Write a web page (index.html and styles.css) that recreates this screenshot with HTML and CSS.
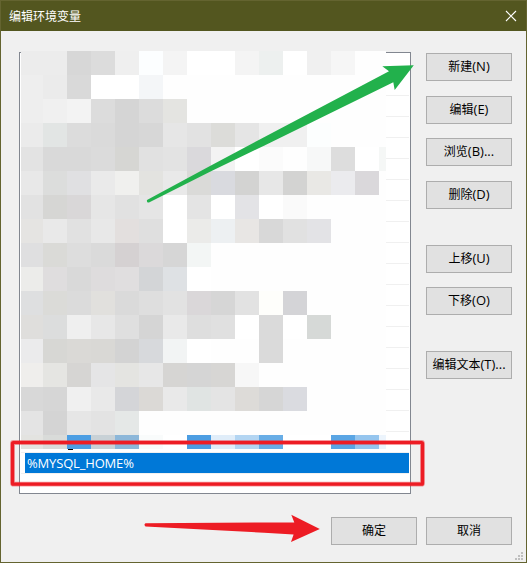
FILE: index.html
```
<!DOCTYPE html>
<html lang="zh-CN">
<head>
<meta charset="utf-8">
<title>编辑环境变量</title>
<link rel="stylesheet" href="styles.css">
</head>
<body>
<div class="window">
  <header class="titlebar">
    <h1 class="title">编辑环境变量</h1>
    <svg class="close" width="12" height="12" viewBox="0 0 12 12"><path d="M1 1L11 11M11 1L1 11"/></svg>
  </header>
  <main class="content">
    <div class="list">
      <div class="rows"></div>
      <div class="row selected"><span class="value">%MYSQL_HOME%</span></div>
      <div class="mosaic" id="mosaic"></div>
      <div class="speck"></div>
    </div>
    <div class="actions">
      <button class="btn">新建<span class="key">(N)</span></button>
      <button class="btn gap-15">编辑<span class="key">(E)</span></button>
      <button class="btn gap-14">浏览<span class="key">(B)...</span></button>
      <button class="btn gap-15">删除<span class="key">(D)</span></button>
      <button class="btn gap-36">上移<span class="key">(U)</span></button>
      <button class="btn gap-14">下移<span class="key">(O)</span></button>
      <button class="btn gap-36">编辑文本<span class="key">(T)...</span></button>
    </div>
  </main>
  <footer class="footer">
    <button class="btn">确定</button>
    <button class="btn">取消</button>
  </footer>
  <svg class="grip" width="8" height="8" viewBox="0 0 8 8"><path d="M6 0h2v2h-2zM3 3h2v2h-2zM6 3h2v2h-2zM0 6h2v2h-2zM3 6h2v2h-2zM6 6h2v2h-2z"/></svg>
  <svg class="marks" width="527" height="563" viewBox="0 0 527 563">
    <path class="green" d="M147 200L210 166L264 137.3L389 71.2L382.3 66.2L413.8 65.3L394.7 90L393.3 82.3L264 145.7L210 171.7L149 202.4Q146.5 203 147 200Z"/>
    <rect class="frame-soft" x="12.5" y="442.5" width="410" height="41.7" rx="1"/>
    <rect class="frame" x="12.5" y="442.5" width="410" height="41.7" rx="1"/>
    <path class="red" d="M145.5 523.2L264 522.4L294.3 522.4L291.3 514.8L319.8 529L291 542L293.6 534.4L264 532.8L145.5 526.4Q143.4 524.8 145.5 523.2Z"/>
  </svg>
</div>
<script src="mosaic.js"></script>
</body>
</html>
```
FILE: styles.css
```
* { box-sizing: border-box; }
body {
  margin: 0;
  font-family: "Open Sans", "Noto Sans CJK SC", sans-serif;
  font-size: 12px;
  color: #000;
}
.window {
  position: relative;
  width: 527px;
  height: 563px;
  border: 1px solid #646430;
  background: #f0f0f0;
  overflow: hidden;
}
.titlebar {
  display: flex;
  align-items: center;
  justify-content: space-between;
  height: 30px;
  padding: 0 9px 0 8px;
  background: #53561f;
}
.title {
  margin: 0;
  padding-top: 2px;
  font-size: 12px;
  font-weight: 400;
  line-height: 18px;
  color: #fff;
}
.close { fill: none; stroke: #fff; stroke-width: 1.1; }
.content {
  display: flex;
  justify-content: space-between;
  padding: 21px 14px 0 18px;
}
.list {
  position: relative;
  width: 392px;
  height: 442px;
  padding: 0 1px;
  border: 1px solid #828790;
  background: #fff;
}
.rows {
  height: 400px;
  background: repeating-linear-gradient(to bottom, transparent 0 20px, #f0f0f0 20px 21px);
  background-position: 0 22px;
  background-repeat: no-repeat;
}
.row {
  display: flex;
  align-items: center;
  height: 21px;
  border-bottom: 1px solid #f0f0f0;
  font-size: 13px;
  letter-spacing: -0.17px;
  color: #fff;
}
.row .value {
  flex: 1;
  height: 20px;
  margin-left: 4px;
  padding-left: 2px;
  line-height: 20px;
  background: #0078d7;
}
.mosaic {
  position: absolute;
  top: -2px;
  left: 1px;
  display: grid;
  grid-template-columns: 22px repeat(14, 24px) 7px;
  grid-template-rows: repeat(16, 24px) 14px;
}
.speck {
  position: absolute;
  top: 396px;
  left: 48px;
  width: 5px;
  height: 1px;
  background: #000;
}
.actions {
  display: flex;
  flex-direction: column;
  width: 86px;
  padding-top: 1px;
}
.btn {
  width: 86px;
  height: 28px;
  padding: 0;
  border: 1px solid #adadad;
  background: #e1e1e1;
  font: inherit;
  line-height: 18px;
  white-space: nowrap;
  color: #000;
}
.key { font-size: 13px; line-height: 1; }
.gap-14 { margin-top: 14px; }
.gap-15 { margin-top: 15px; }
.gap-36 { margin-top: 36px; }
.footer {
  display: flex;
  justify-content: flex-end;
  gap: 9px;
  padding: 23px 14px 0 0;
}
.grip {
  position: absolute;
  right: 3px;
  bottom: 2px;
  fill: #bfbfbf;
}
.marks {
  position: absolute;
  top: -1px;
  left: -1px;
  pointer-events: none;
}
.green { fill: #22b14c; }
.red { fill: #ed1c24; }
.frame { fill: none; stroke: #ed1c24; stroke-width: 3.2; }
.frame-soft { fill: none; stroke: #ed1c24; stroke-opacity: .45; stroke-width: 4.8; }
```
FILE: mosaic.js
```
// Tile colours, row by row; tiles missing at the end of a row are near-white.
const rows = [
  "ececec ececec d7d7d7 dcdcdc efefef fcfeff f4f4f4 ffffff ffffff f4f4f4 edf0ef ffffff f0f0f0 f6f6f6",
  "eeeeee ebebeb d9d9d9 ffffff ffffff f4f6f8",
  "eeeeee f0f0f0 f3f3f3 dcdcdc d5d5d5 dcdcdc e4e4e1",
  "ebebeb e2e5e4 dcdcdc dadada d5d5d5 d7d7d7 e6e6e6 e2e2e2 dcdcd9 e5e5e5 f0f0f0 f0f0f0 fcfefe",
  "e3e3e3 d9d9d9 d9d9d9 dbdbdb d6d6d3 e1e1e1 e3e3e3 dad9dc f3f3f3 ffffff fbfbfb fefefe f7f8f8 dddddd ffffff f5f7f6",
  "e8e8e8 dcdddc e0e0e2 eaeaea f0f0ee e3e3e0 e9e9e9 dadad8 d9dadf d3d3d2 e7e7e7 d3d3d2 e9e8e5 ebebee dad8db",
  "e2e2e2 d6d6d4 d9d7d8 e6e6e6 e1e1e1 e5e5e5 ffffff e4e4e4 ffffff e3e3e6 ffffff fafafa",
  "e5e4e2 e9e9e9 e1e1e1 e8e8e8 e3dfde dfdfdf ffffff ebebe9 edf0f2 e8e6e4 d8d8d8 e1e1e1 e3e3e6",
  "dfdfe0 dadad7 dddddd dadada d5d1d2 dbd9da d6d6d6 f3f6f5",
  "ececea dfddde d9d9d9 dedcdd e0dedf d3d5d7 dee1e4 ffffff",
  "dedfe0 dbdbd8 dbdbdb e1e0dd dadada dedede e2e2e2 dad7d9 d6d6d6 e2e2e2 fefefb d4d4d7",
  "dfdedc dcdddd efefef e7e7e7 dfdfdf d5d5d5 e9e9e9 dedede e0e0e0 ffffff dadada ffffff d6d9d7",
  "ebebec d7d7d4 dad9d6 d9d8d5 d3d3d3 d7d9dc f2f4f4 ffffff fefefe fefefe dadada",
  "efeeec e5e5e2 d6d5d3 e5e5e6 e4e4e1 e7e7e7 d6d5d3 d5d5d5 d7d6d4 f7f7f7",
  "d8d8d8 d6d6d6 f0f0f0 e9e9e9 d4d5d8 dbd9d6 e9e9e9 e0e4e3 e4e4e4 dddbd8 d6d6d6 dadbe0",
  "e4e4e4 d4d4d4 e6e6e6 e3e3e3 e5e8e7",
  "e3e3e0 d9dbd9 4c9ee3 c8d1d6 8cb7d9 f9fbfb ffffff 4c9de2 e0edf9 b3d5f2 68ade6 ffffff ffffff 5aa5e4 95c5ee ecf4fc"
];
const mosaic = document.getElementById("mosaic");
for (const row of rows) {
  const colors = row.split(" ");
  for (let i = 0; i < 16; i++) {
    const tile = document.createElement("span");
    tile.style.background = "#" + (colors[i] || "fefefe");
    mosaic.append(tile);
  }
}
```
